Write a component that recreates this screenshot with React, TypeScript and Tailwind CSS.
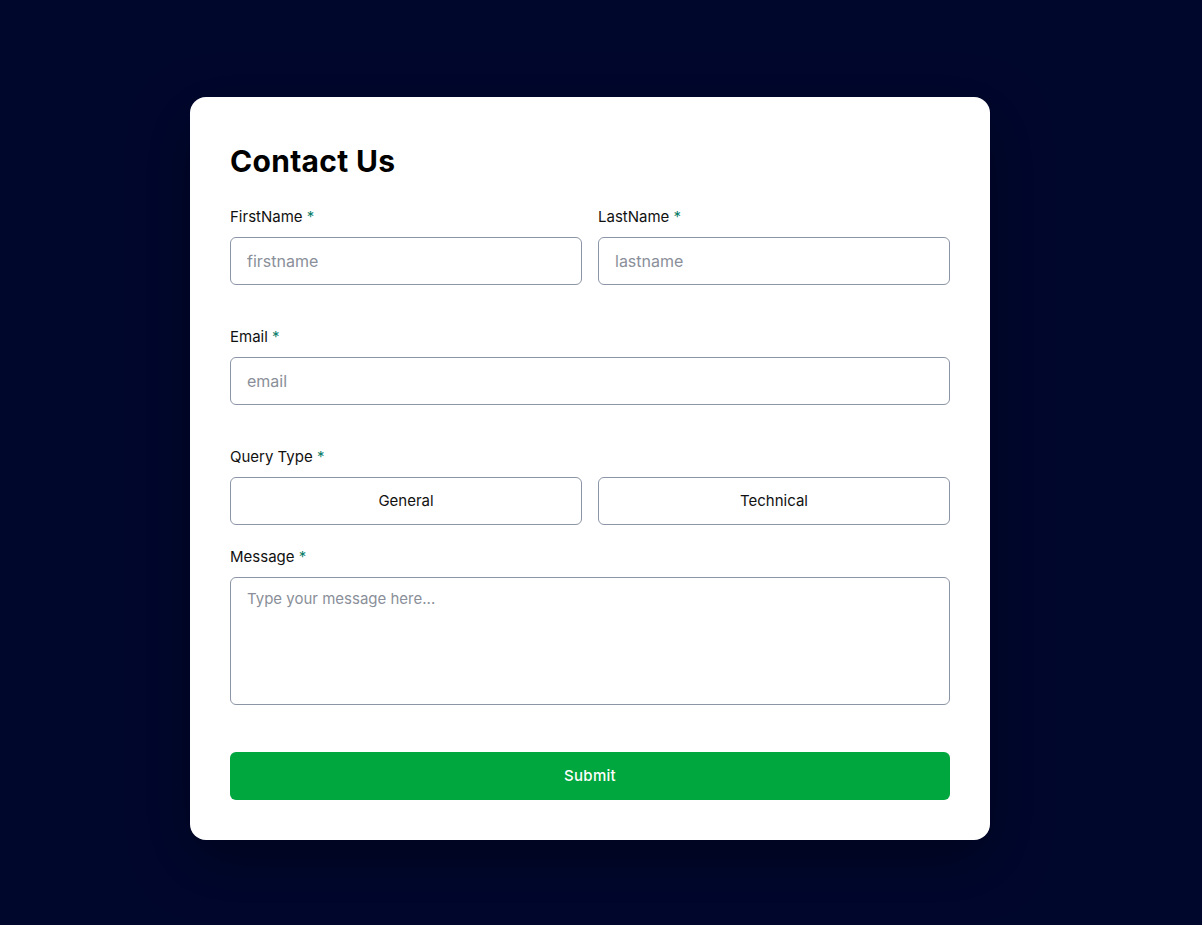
import React, { useState } from 'react';

const Req = () => <span className="text-[#0c7d69]"> *</span>;

export default function App() {
  const [query, setQuery] = useState<string>('');

  return (
    <div className="min-h-screen w-full bg-[#00072d] flex justify-center pr-[22px] pt-[97px] pb-[85px] font-['Inter',sans-serif]">
      <form
        className="w-[800px] bg-white rounded-2xl p-10 flex flex-col shadow-[0_20px_60px_rgba(0,0,0,0.35)]"
        onSubmit={(e) => e.preventDefault()}
      >
        <h1 className="text-[30px] leading-[40px] font-bold text-black tracking-[0.3px] mt-[4px]">Contact Us</h1>

        <div className="grid grid-cols-2 gap-4 mt-[26px]">
          <div className="flex flex-col">
            <label className="text-[15px] leading-[20px] text-[#111]">
              FirstName<Req />
            </label>
            <input
              placeholder="firstname"
              className="mt-[10px] h-12 rounded-md border border-[#8c95a6] px-4 text-[16px] placeholder:text-[#8a8f99] outline-none"
            />
          </div>
          <div className="flex flex-col">
            <label className="text-[15px] leading-[20px] text-[#111]">
              LastName<Req />
            </label>
            <input
              placeholder="lastname"
              className="mt-[10px] h-12 rounded-md border border-[#8c95a6] px-4 text-[16px] placeholder:text-[#8a8f99] outline-none"
            />
          </div>
        </div>

        <div className="flex flex-col mt-[42px]">
          <label className="text-[15px] leading-[20px] text-[#111]">
            Email<Req />
          </label>
          <input
            placeholder="email"
            className="mt-[10px] h-12 rounded-md border border-[#8c95a6] px-4 text-[16px] placeholder:text-[#8a8f99] outline-none"
          />
        </div>

        <div className="flex flex-col mt-[42px]">
          <label className="text-[15px] leading-[20px] text-[#111]">
            Query Type<Req />
          </label>
          <div className="grid grid-cols-2 gap-4 mt-[10px]">
            {['General', 'Technical'].map((q) => (
              <button
                key={q}
                type="button"
                onClick={() => setQuery(q)}
                className={
                  query === q
                    ? 'h-12 rounded-md border border-[#0c7d69] bg-[#e0f1e8] text-[15px] text-[#111]'
                    : 'h-12 rounded-md border border-[#8c95a6] bg-white text-[15px] text-[#111]'
                }
              >
                {q}
              </button>
            ))}
          </div>
        </div>

        <div className="flex flex-col mt-[22px]">
          <label className="text-[15px] leading-[20px] text-[#111]">
            Message<Req />
          </label>
          <textarea
            placeholder="Type your message here..."
            className="mt-[10px] h-32 resize-none rounded-md border border-[#8c95a6] px-4 py-[10px] text-[15px] placeholder:text-[#8a8f99] outline-none"
          />
        </div>

        <button
          type="submit"
          className="mt-[47px] h-12 rounded-md bg-[#00a63e] text-white text-[15px] font-medium tracking-[0.3px]"
        >
          Submit
        </button>
      </form>
    </div>
  );
}
